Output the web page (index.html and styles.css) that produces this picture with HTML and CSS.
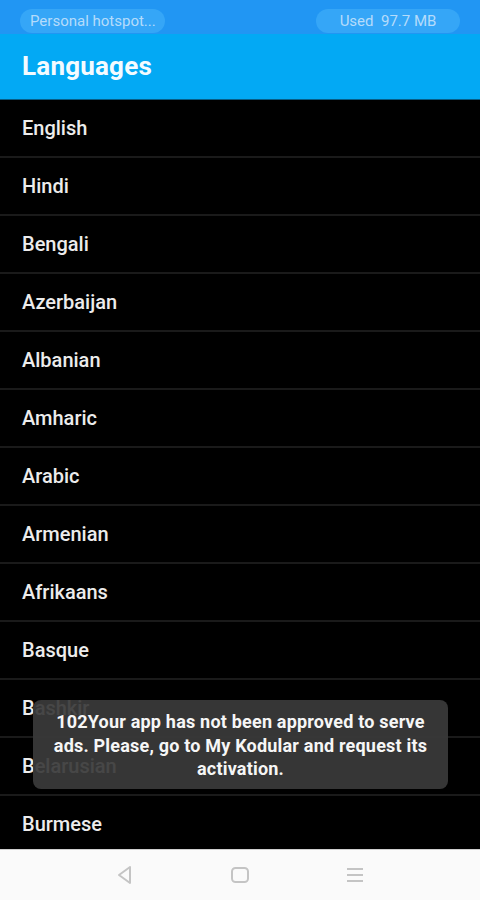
FILE: index.html
```html
<!DOCTYPE html>
<html lang="en">
<head>
  <meta charset="UTF-8" />
  <title>Languages</title>
  <link rel="stylesheet" href="styles.css">
</head>
<body>
  <div class="screen">
    <div class="status-bar">
      <span class="pill pill-left">Personal hotspot...</span>
      <span class="pill pill-right">Used&nbsp; 97.7 MB</span>
    </div>

    <div class="app-bar">
      <h1>Languages</h1>
    </div>

    <ul class="lang-list">
      <li>English</li>
      <li>Hindi</li>
      <li>Bengali</li>
      <li>Azerbaijan</li>
      <li>Albanian</li>
      <li>Amharic</li>
      <li>Arabic</li>
      <li>Armenian</li>
      <li>Afrikaans</li>
      <li>Basque</li>
      <li>Bashkir</li>
      <li>Belarusian</li>
      <li>Burmese</li>
    </ul>

    <div class="toast">102Your app has not been approved to serve ads. Please, go to My Kodular and request its activation.</div>

    <div class="nav-bar">
      <svg class="nav-icon" width="22" height="22" viewBox="0 0 22 22">
        <path d="M16 3 L5 11 L16 19 Z" fill="none" stroke="#c4c4c4" stroke-width="2" stroke-linejoin="round"/>
      </svg>
      <svg class="nav-icon" width="22" height="22" viewBox="0 0 22 22">
        <rect x="3" y="4" width="16" height="14" rx="3.5" fill="none" stroke="#c4c4c4" stroke-width="2"/>
      </svg>
      <svg class="nav-icon" width="22" height="22" viewBox="0 0 22 22">
        <path d="M3 5 H19 M3 11 H19 M3 17 H19" stroke="#c4c4c4" stroke-width="2"/>
      </svg>
    </div>
  </div>
</body>
</html>
```

FILE: styles.css
```css
html, body {
  margin: 0;
  padding: 0;
  background: #000;
}

body {
  font-family: Roboto, 'Noto Sans', sans-serif;
}

.screen {
  position: relative;
  width: 480px;
  height: 900px;
  overflow: hidden;
  display: flex;
  flex-direction: column;
}

.status-bar {
  height: 34px;
  background: #2196f3;
  display: flex;
  justify-content: space-between;
  align-items: flex-start;
  padding: 9px 20px 0 20px;
  box-sizing: border-box;
}

.pill {
  height: 24px;
  line-height: 24px;
  border-radius: 12px;
  background: #35a6f7;
  color: #b5dcfb;
  font-size: 15px;
  box-sizing: border-box;
  white-space: nowrap;
}

.pill-left {
  width: 145px;
  padding-left: 10px;
}

.pill-right {
  width: 144px;
  text-align: center;
}

.app-bar {
  height: 65px;
  background: #03a9f4;
  border-bottom: 1px solid #075d86;
  display: flex;
  align-items: center;
  padding: 0 22px;
}

h1 {
  margin: 0 0 2px 0;
  color: #f4fbff;
  font-size: 26px;
  font-weight: 700;
  letter-spacing: 0.2px;
}

.lang-list {
  list-style: none;
  margin: 0;
  padding: 0;
  flex: 1;
}

.lang-list li {
  height: 56px;
  line-height: 57px;
  padding-left: 22px;
  border-bottom: 2px solid #1a1a1a;
  color: #ececec;
  font-size: 20px;
  font-weight: 500;
}

.toast {
  position: absolute;
  left: 33px;
  top: 700px;
  width: 415px;
  height: 89px;
  box-sizing: border-box;
  padding: 10px 18px 0 18px;
  border-radius: 8px;
  background: rgba(58, 58, 58, 0.93);
  color: #f6f6f6;
  font-size: 18px;
  font-weight: 700;
  letter-spacing: 0.2px;
  line-height: 23.5px;
  text-align: center;
}

.nav-bar {
  position: absolute;
  left: 0;
  bottom: 0;
  width: 100%;
  height: 51px;
  background: #fafafa;
  border-top: 1px solid #cfcfcf;
  display: grid;
  grid-template-columns: 1fr 1fr 1fr;
  align-items: center;
  justify-items: center;
  padding: 0 68px;
  box-sizing: border-box;
}
```
